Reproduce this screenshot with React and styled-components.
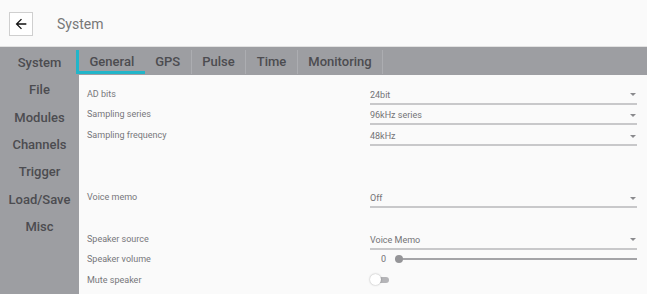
import React from "react";
import styled, { createGlobalStyle } from "styled-components";

const Global = createGlobalStyle`
  html, body { margin: 0; padding: 0; background: #fafafa; }
  body { font-family: Roboto, "Noto Sans", sans-serif; overflow: hidden; }
  * { box-sizing: border-box; }
`;

const Page = styled.div`
  width: 647px;
  height: 294px;
  display: flex;
  flex-direction: column;
  background: #fafafa;
`;

const Header = styled.header`
  height: 47px;
  display: flex;
  align-items: center;
  padding: 1px 0 0 9px;
  gap: 24px;
  background: #fafafa;
  border-bottom: 1px solid #e2e2e2;
`;

const BackButton = styled.button`
  width: 24px;
  height: 24px;
  padding: 0;
  border: 1px solid #cfcfcf;
  background: #fff;
  display: flex;
  align-items: center;
  justify-content: center;
`;

const Title = styled.h1`
  margin: 0;
  font-size: 14px;
  font-weight: 400;
  color: #777;
`;

const Body = styled.div`
  flex: 1;
  display: grid;
  grid-template-columns: 79px 1fr;
  grid-template-rows: 28px 1fr;
  background: #9d9ea2;
`;

const Sidebar = styled.nav`
  grid-row: 1 / span 2;
  display: flex;
  flex-direction: column;
  padding-top: 2px;
`;

const SideItem = styled.div`
  height: 27.3px;
  display: flex;
  align-items: center;
  justify-content: center;
  font-size: 13px;
  font-weight: 500;
  color: #4c4c50;
`;

const TabBar = styled.div`
  display: flex;
  align-items: stretch;
  padding-top: 3px;
  margin-left: -3px;
`;

const Tab = styled.div`
  display: flex;
  align-items: center;
  padding: 0 10.5px 2px;
  font-size: 13px;
  font-weight: 500;
  color: #4c4c50;
  border-right: ${(p) => (p.$active ? "none" : "1px solid #acadb1")};
  border-left: ${(p) => (p.$active ? "3px solid #22b5c9" : "none")};
  box-shadow: ${(p) => (p.$active ? "inset 0 -3px 0 #22b5c9" : "none")};
  margin-bottom: 1px;
`;

const Content = styled.div`
  background: #fafafa;
  padding: 7.5px 10px 0 8px;
  display: flex;
  flex-direction: column;
`;

const Row = styled.div`
  height: 20.75px;
  display: grid;
  grid-template-columns: 283px 1fr;
  align-items: center;
`;

const Label = styled.span`
  font-size: 9px;
  color: #77777a;
`;

const Select = styled.div`
  height: 18px;
  margin-top: 4px;
  display: flex;
  align-items: center;
  justify-content: space-between;
  border-bottom: 2px solid #c8c8ca;
  font-size: 9px;
  color: #737376;
  padding-right: 1px;
`;

const Caret = styled.span`
  width: 0;
  height: 0;
  border-left: 3px solid transparent;
  border-right: 3px solid transparent;
  border-top: 3px solid #8a8a8d;
`;

const SliderWrap = styled.div`
  display: flex;
  align-items: center;
  gap: 9px;
  padding-left: 11px;
  font-size: 9px;
  color: #737376;
`;

const Track = styled.div`
  flex: 1;
  height: 2px;
  background: #a4a4a7;
  position: relative;
`;

const Thumb = styled.span`
  position: absolute;
  left: 0;
  top: -3px;
  width: 8px;
  height: 8px;
  border-radius: 50%;
  background: #959598;
`;

const Switch = styled.div`
  position: relative;
  width: 20px;
  height: 10px;
  display: flex;
  align-items: center;
`;

const SwitchTrack = styled.span`
  margin-left: 5px;
  width: 14px;
  height: 6px;
  border-radius: 3px;
  background: #b5b5b8;
`;

const SwitchKnob = styled.span`
  position: absolute;
  left: 0;
  top: -1px;
  width: 11px;
  height: 11px;
  border-radius: 50%;
  background: #fff;
  box-shadow: 0 0 2px rgba(0, 0, 0, 0.35);
`;

const sideItems = ["System", "File", "Modules", "Channels", "Trigger", "Load/Save", "Misc"];
const tabs = ["General", "GPS", "Pulse", "Time", "Monitoring"];

const Sel = ({ value }) => (
  <Select>
    <span>{value}</span>
    <Caret />
  </Select>
);

export default function App() {
  return (
    <Page>
      <Global />
      <Header>
        <BackButton aria-label="back">
          <svg width="16" height="16" viewBox="0 0 24 24">
            <path d="M20 11H7.83l5.59-5.59L12 4l-8 8 8 8 1.41-1.41L7.83 13H20v-2z" fill="#111" />
          </svg>
        </BackButton>
        <Title>System</Title>
      </Header>
      <Body>
        <Sidebar>
          {sideItems.map((s) => (
            <SideItem key={s}>{s}</SideItem>
          ))}
        </Sidebar>
        <TabBar>
          {tabs.map((t, i) => (
            <Tab key={t} $active={i === 0}>{t}</Tab>
          ))}
        </TabBar>
        <Content>
          <Row><Label>AD bits</Label><Sel value="24bit" /></Row>
          <Row><Label>Sampling series</Label><Sel value="96kHz series" /></Row>
          <Row><Label>Sampling frequency</Label><Sel value="48kHz" /></Row>
          <Row />
          <Row />
          <Row><Label>Voice memo</Label><Sel value="Off" /></Row>
          <Row />
          <Row><Label>Speaker source</Label><Sel value="Voice Memo" /></Row>
          <Row>
            <Label>Speaker volume</Label>
            <SliderWrap>
              <span>0</span>
              <Track><Thumb /></Track>
            </SliderWrap>
          </Row>
          <Row>
            <Label>Mute speaker</Label>
            <Switch><SwitchTrack /><SwitchKnob /></Switch>
          </Row>
        </Content>
      </Body>
    </Page>
  );
}
